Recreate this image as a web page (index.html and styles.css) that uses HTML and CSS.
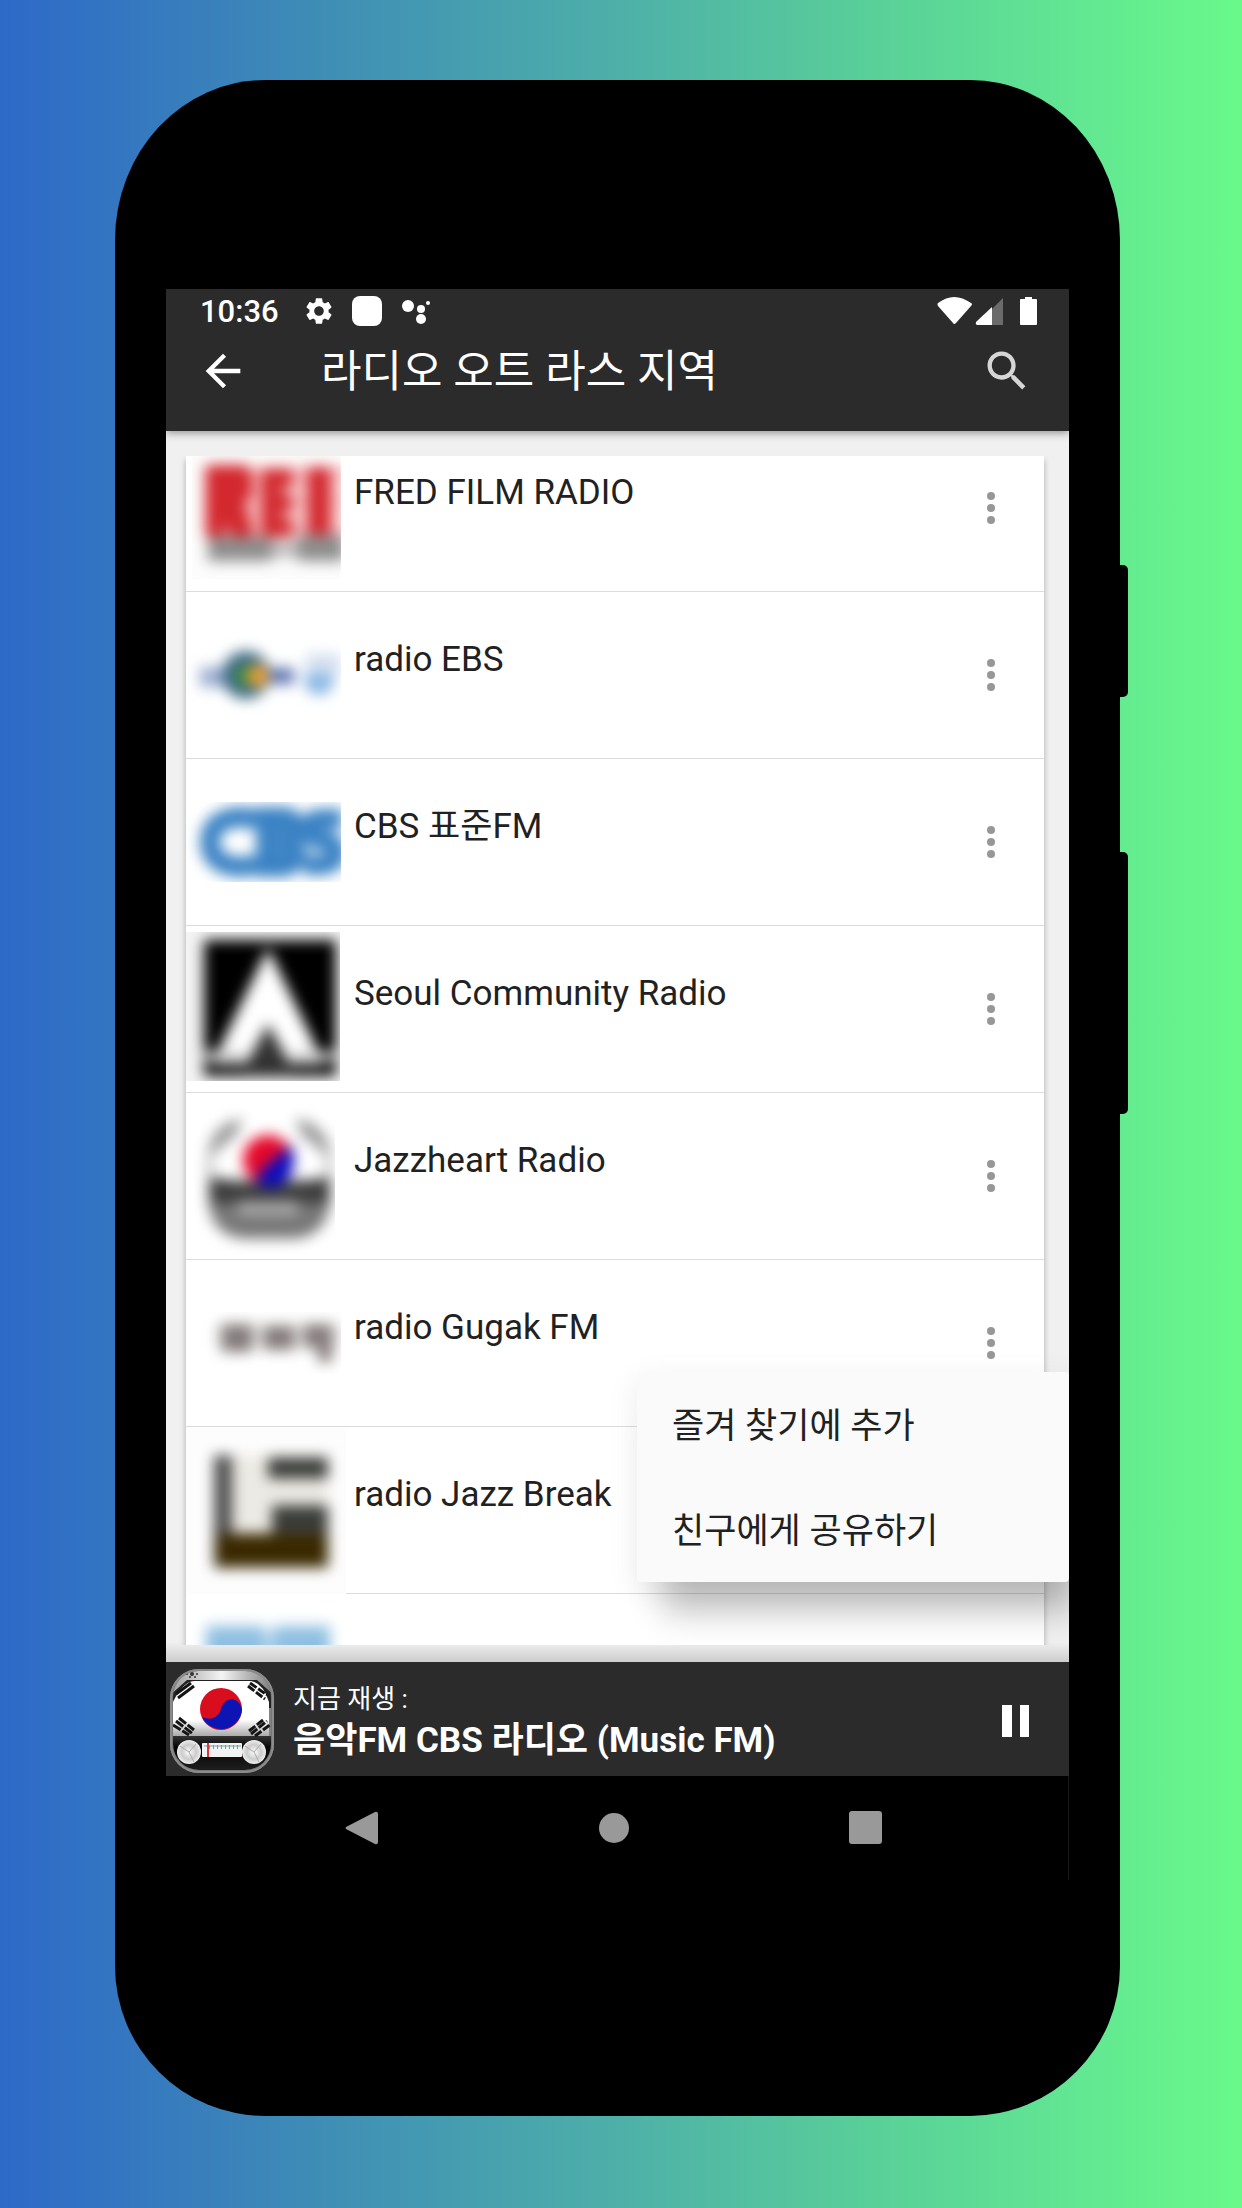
FILE: index.html
```html
<!DOCTYPE html>
<html lang="ko">
<head>
<meta charset="utf-8">
<meta name="viewport" content="width=device-width, initial-scale=1">
<title>라디오 오트 라스 지역</title>
<link rel="stylesheet" href="styles.css">
</head>
<body>
<div class="phone">
  <span class="side-key side-key--power"></span>
  <span class="side-key side-key--volume"></span>
  <div class="screen">
    <header class="app-header">
      <div class="status-bar">
        <time class="clock">10:36</time>
        <svg class="status-icon" width="32" height="32" viewBox="0 0 24 24" fill="#fff"><path d="M19.14 12.94c.04-.3.06-.61.06-.94 0-.32-.02-.64-.07-.94l2.03-1.58c.18-.14.23-.41.12-.61l-1.92-3.32c-.12-.22-.37-.29-.59-.22l-2.39.96c-.5-.38-1.03-.7-1.62-.94L14.4 2.81c-.04-.24-.24-.41-.48-.41h-3.84c-.24 0-.43.17-.47.41L9.25 5.35C8.66 5.59 8.12 5.92 7.63 6.29L5.24 5.33c-.22-.08-.47 0-.59.22L2.74 8.87c-.12.21-.08.47.12.61l2.03 1.58c-.05.3-.09.63-.09.94s.02.64.07.94l-2.03 1.58c-.18.14-.23.41-.12.61l1.92 3.32c.12.22.37.29.59.22l2.39-.96c.5.38 1.03.7 1.62.94l.36 2.54c.05.24.24.41.48.41h3.84c.24 0 .44-.17.47-.41l.36-2.54c.59-.24 1.13-.56 1.62-.94l2.39.96c.22.08.47 0 .59-.22l1.92-3.32c.12-.22.07-.47-.12-.61l-2.01-1.58zM12 15.6c-1.98 0-3.6-1.62-3.6-3.6s1.62-3.6 3.6-3.6 3.6 1.62 3.6 3.6-1.62 3.6-3.6 3.6z"/></svg>
        <span class="status-tile"></span>
        <svg class="status-icon" width="30" height="30" viewBox="0 0 30 30" fill="#fff"><circle cx="6" cy="10" r="6"/><circle cx="19" cy="13" r="4"/><circle cx="26" cy="7" r="2"/><circle cx="19" cy="23" r="5"/></svg>
        <svg class="status-signals" width="102" height="30" viewBox="0 0 102 30"><path fill="#fff" d="M1 7Q17-5 34 7Q36 8 34 10L19 27Q17 29 16 27L1 10Q0 8 1 7Z"/><path fill="#6b6b6b" d="M39 29L66 2V29Z"/><path fill="#fff" d="M40 29Q38 28 39 26L55 11V29Z"/><path fill="#fff" d="M88 1h7v2h4q1 0 1 1v24q0 1-1 1h-15q-1 0-1-1V4q0-1 1-1h4z"/></svg>
      </div>
      <div class="toolbar">
        <button class="icon-button" type="button" aria-label="뒤로"><svg width="52" height="52" viewBox="0 0 24 24" fill="#fff"><path d="M20 11H7.830l5.590-5.590L12 4l-8 8 8 8 1.410-1.410L7.830 13H20v-2z"/></svg></button>
        <h1 class="toolbar-title">라디오 오트 라스 지역</h1>
        <button class="icon-button" type="button" aria-label="검색"><svg width="52" height="52" viewBox="0 0 24 24" fill="#d6d6d6"><path d="M15.500 14h-.79l-.28-.27C15.410 12.590 16 11.110 16 9.500 16 5.910 13.090 3 9.500 3S3 5.910 3 9.500 5.910 16 9.500 16c1.610 0 3.090-.59 4.230-1.570l.27.28v.79l5 4.990L20.490 19l-4.990-5zm-6 0C7.010 14 5 11.990 5 9.500S7.010 5 9.500 5 14 7.010 14 9.500 11.990 14 9.500 14z"/></svg></button>
      </div>
    </header>

    <main class="content">
      <ul class="stations">
        <li class="station">
          <svg class="logo" viewBox="0 0 160 166"><g clip-path="url(#cut)"><rect x="6" y="20" width="148" height="134" fill="#fdfcfc"/><g filter="url(#soft)"><rect x="18" y="42" width="140" height="70" fill="#e8474d" fill-opacity=".4"/><path fill="#d2282e" d="M20 40h40l6 10v20l-8 8 10 34H20zM76 44h30v68H76zM122 42h22v70h-22z"/><path fill="#fff" opacity=".6" d="M94 62h24v8H94zM94 86h24v8H94zM38 96l8 16h-8zM148 56q14 22 0 44h12V56z"/><rect x="22" y="112" width="64" height="24" fill="#8d8d8d"/><rect x="86" y="116" width="26" height="16" fill="#bbb"/><rect x="112" y="110" width="46" height="26" fill="#8d8d8d"/></g></g></svg>
          <span class="station-name">FRED FILM RADIO</span>
          <button class="more" type="button" aria-label="더보기"><i></i><i></i><i></i></button>
        </li>
        <li class="station">
          <svg class="logo" viewBox="0 0 160 166"><g clip-path="url(#cut)"><g filter="url(#soft)"><rect x="14" y="75" width="38" height="20" fill="#9eafd2"/><circle cx="60" cy="83" r="24" fill="#3f6c86"/><rect x="80" y="76" width="28" height="16" fill="#5a73b0"/><circle cx="59" cy="84" r="10" fill="#389040"/><circle cx="72" cy="84" r="11" fill="#f0a02c"/><circle cx="133" cy="88" r="15" fill="#8ab8e4"/><rect x="120" y="62" width="34" height="20" fill="#d3dff0"/></g></g></svg>
          <span class="station-name">radio EBS</span>
          <button class="more" type="button" aria-label="더보기"><i></i><i></i><i></i></button>
        </li>
        <li class="station">
          <svg class="logo" viewBox="0 0 160 166"><g clip-path="url(#cut)"><g filter="url(#soft)" fill="none" stroke="#3a82c4" stroke-width="20"><path d="M72 64Q66 58 54 58Q24 60 24 83T54 108Q66 108 72 102"/><path fill="#4a8dca" d="M80 58h18q10 0 10 12t-10 13q12 2 12 12t-12 13H80z"/><path d="M156 60h-20q-13 0-13 10t13 11 14 12-14 13h-18"/></g></g></svg>
          <span class="station-name">CBS 표준FM</span>
          <button class="more" type="button" aria-label="더보기"><i></i><i></i><i></i></button>
        </li>
        <li class="station">
          <svg class="logo" viewBox="0 0 160 166"><g clip-path="url(#square)"><rect y="6" width="156" height="149" fill="#f4f4f4"/><g filter="url(#soft)"><rect x="18" y="14" width="132" height="136"/><path fill="#fff" d="M82 22L26 138H60L82 98L104 138H138Z"/><path fill="#333" d="M82 98L56 146H108Z"/><path stroke="#ccc" stroke-width="9" d="M14 130H58M106 130H156"/></g></g></svg>
          <span class="station-name">Seoul Community Radio</span>
          <button class="more" type="button" aria-label="더보기"><i></i><i></i><i></i></button>
        </li>
        <li class="station">
          <svg class="logo" viewBox="0 0 160 166"><g clip-path="url(#narrow)"><g filter="url(#soft)"><rect x="22" y="26" width="122" height="120" rx="36" fill="#999"/><path fill="#fff" d="M58 22h50l8 20 24 20v24H26V62l24-20z"/><path fill="#3c3c3c" d="M24 84l32 6h54l34-6v26H24z"/><path fill="#777" d="M26 110h116q-4 32-34 34H60q-30-2-34-34z"/><rect x="52" y="108" width="60" height="14" fill="#aaa"/><circle cx="82" cy="67" r="25" fill="#e4082a"/><path fill="#0c0cc0" d="M106 52Q112 76 100 88T70 90Q74 78 84 70T106 52Z"/></g></g></svg>
          <span class="station-name">Jazzheart Radio</span>
          <button class="more" type="button" aria-label="더보기"><i></i><i></i><i></i></button>
        </li>
        <li class="station">
          <svg class="logo" viewBox="0 0 160 166"><g clip-path="url(#cut)"><g filter="url(#soft)" fill="#857b7b"><path d="M36 64h30v28H36zM78 66h30v24H78zM118 64h28v38h-14V88h-14z"/><rect x="30" y="64" width="124" height="24" opacity=".25"/></g></g></svg>
          <span class="station-name">radio Gugak FM</span>
          <button class="more" type="button" aria-label="더보기"><i></i><i></i><i></i></button>
        </li>
        <li class="station">
          <svg class="logo logo--cover" viewBox="0 0 160 166"><g filter="url(#soft)"><rect x="28" y="28" width="114" height="112" fill="#eceae4"/><path fill="#4c4c4c" d="M28 28h18v112H28z"/><path fill="#3a3c38" d="M82 30h60v21H82zM86 78h56v28H86z"/><path fill="#3a2900" d="M30 106h112v34H30z"/></g></svg>
          <span class="station-name">radio Jazz Break</span>
          <button class="more" type="button" aria-label="더보기"><i></i><i></i><i></i></button>
        </li>
        <li class="station station--partial">
          <svg class="logo" viewBox="0 0 160 166"><g filter="url(#soft)" fill="#8fc0e2"><path d="M20 32h58v40H20zM88 32h56v40H88z"/><path opacity=".6" d="M70 36h24v40H70z"/></g></svg>
        </li>
      </ul>
      <ul class="popup-menu">
        <li><button class="menu-item" type="button">즐겨 찾기에 추가</button></li>
        <li><button class="menu-item" type="button">친구에게 공유하기</button></li>
      </ul>
    </main>

    <section class="player">
      <svg class="player-art" width="106" height="106" viewBox="0 0 106 106">
        <defs>
          <linearGradient id="metal"><stop offset="0" stop-color="#999"/><stop offset=".5" stop-color="#f4f4f4"/><stop offset=".75" stop-color="#b5b5b5"/><stop offset="1" stop-color="#777"/></linearGradient>
          <linearGradient id="flag" x2="0" y2="1"><stop offset=".7" stop-color="#fff"/><stop offset="1" stop-color="#aaa"/></linearGradient>
          <linearGradient id="base" x2="0" y2="1"><stop offset="0" stop-color="#333"/><stop offset=".3" stop-color="#050505"/><stop offset="1" stop-color="#222"/></linearGradient>
          <radialGradient id="knob"><stop offset="0" stop-color="#fff"/><stop offset=".6" stop-color="#ccc"/><stop offset="1" stop-color="#eee"/></radialGradient>
          <clipPath id="body"><rect x="4" y="3" width="98" height="99" rx="26"/></clipPath>
        </defs>
        <rect x="1" y="1" width="104" height="104" rx="29" fill="#777"/>
        <g clip-path="url(#body)">
          <rect width="106" height="106" fill="url(#metal)"/>
          <path fill="#222" d="M0 28L18 12H88L106 28V40H0Z"/>
          <path fill="url(#flag)" d="M4 34Q14 13 26 13H82Q94 15 100 34V68H4Z"/>
          <rect y="68" width="106" height="38" fill="url(#base)"/>
          <g stroke="#151515" stroke-width="3" fill="none"><path d="M7 26L22 15M9 30L25 18"/><path stroke-dasharray="8 2" d="M81 15L98 27M79 18L96 31"/><path stroke-dasharray="9 2" d="M4 57L20 67M7 53L24 66M10 50L25 62"/><path stroke-dasharray="8 2" d="M82 66L98 53M86 68L102 56M80 63L94 52"/></g>
          <circle cx="52" cy="41" r="21" fill="#d80d1e"/>
          <path fill="#0c14b4" d="M73 41A21 21 0 0 1 33 49Q45 54 51 44Q53 33 62 31Q70 31 73 41Z"/>
          <rect x="33" y="75" width="40" height="14" rx="1" fill="#f2f2f2"/>
          <path stroke="#6ca0ae" d="M35 78H72"/><path stroke="#6ca0ae" stroke-width="4" stroke-dasharray="1 3" d="M40 79H72"/>
          <path stroke="#e03434" stroke-width="2" d="M39 75V89"/>
        </g>
        <g fill="url(#knob)"><circle cx="20" cy="84" r="12"/><circle cx="85" cy="84" r="12"/></g>
        <g stroke="#aaa"><path d="M20 84L11 78M20 84L25 94M20 84L27 76M85 84L76 78M85 84L90 94M85 84L92 76"/></g>
        <g fill="#333"><circle cx="18" cy="6" r="1"/><circle cx="23" cy="6" r="2"/><circle cx="28" cy="6" r="1"/><circle cx="21" cy="9" r="1"/><circle cx="26" cy="9" r="1"/></g>
        <rect x="2" y="2" width="102" height="102" rx="28" fill="none" stroke="#8c8c8c" stroke-width="2"/>
      </svg>
      <div class="player-text">
        <span class="player-label">지금 재생 :</span>
        <strong class="player-title">음악FM CBS 라디오 (Music FM)</strong>
      </div>
      <button class="icon-button" type="button" aria-label="일시정지"><svg width="52" height="52" viewBox="0 0 52 52" fill="#fff"><path d="M12 10h10v32H12zM30 10h9v32h-9z"/></svg></button>
    </section>

    <nav class="system-nav">
      <button class="nav-key" type="button" aria-label="뒤로"><svg width="34" height="34" viewBox="0 0 34 34" fill="#999"><path d="M1 16L30 1Q33 0 33 3V31Q33 34 30 33L1 18Q0 17 1 16Z"/></svg></button>
      <button class="nav-key" type="button" aria-label="홈"><svg width="34" height="34" viewBox="0 0 34 34" fill="#999"><circle cx="17" cy="17" r="15"/></svg></button>
      <button class="nav-key" type="button" aria-label="최근 앱"><svg width="34" height="34" viewBox="0 0 34 34" fill="#999"><rect width="33" height="33" rx="3"/></svg></button>
    </nav>
  </div>
</div>
<svg class="shared-defs" width="0" height="0" aria-hidden="true">
  <filter id="soft" x="-20%" y="-30%" width="140%" height="160%" color-interpolation-filters="sRGB"><feGaussianBlur stdDeviation="7"/></filter>
  <clipPath id="cut"><rect width="155" height="166"/></clipPath>
  <clipPath id="square"><rect y="6" width="154" height="149"/></clipPath>
  <clipPath id="narrow"><rect width="149" height="166"/></clipPath>
</svg>
</body>
</html>
```
FILE: styles.css
```css
* {
  box-sizing: border-box;
}

body {
  margin: 0;
  padding: 80px 122px 92px 115px;
  background: linear-gradient(90deg, #2d69c8 0%, #3a82ba 18%, #459cb0 36%, #4eb0a8 50%, #59cf99 70%, #62e792 87%, #69f98a 100%);
  font-family: Roboto, "Noto Sans CJK KR", sans-serif;
  font-size: 35px;
  line-height: 44px;
  color: #212121;
}

ul {
  margin: 0;
  padding: 0;
  list-style: none;
}

button {
  border: 0;
  padding: 0;
  background: none;
  color: inherit;
  font: inherit;
  cursor: pointer;
}

svg {
  display: block;
  flex: none;
}

.shared-defs {
  position: absolute;
}

.phone {
  position: relative;
  padding: 209px 51px 236px;
  border-radius: 150px / 160px 160px 150px 150px;
  background: #000;
}

.side-key {
  position: absolute;
  right: -8px;
  width: 16px;
  border-radius: 5px;
  background: #000;
}

.side-key--power {
  top: 485px;
  height: 132px;
}

.side-key--volume {
  top: 772px;
  height: 262px;
}

.screen {
  display: flex;
  flex-direction: column;
}

.app-header {
  position: relative;
  z-index: 1;
  padding-bottom: 21px;
  background: #2b2b2b;
  color: #fff;
  box-shadow: 0 2px 8px rgba(0, 0, 0, 0.4);
}

.status-bar {
  display: flex;
  align-items: center;
  height: 43px;
  padding: 0 30px 0 34px;
}

.clock {
  margin-right: 24px;
  padding-top: 2px;
  font-size: 31px;
  font-weight: 500;
}

.status-icon {
  margin-right: 17px;
}

.status-tile {
  width: 30px;
  height: 30px;
  margin-right: 20px;
  border-radius: 8px;
  background: #fff;
}

.status-signals {
  margin-left: auto;
}

.toolbar {
  display: flex;
  align-items: center;
  height: 78px;
  padding: 0 36px 0 31px;
}

.toolbar-title {
  flex: 1;
  margin: 0 0 0 72px;
  padding-top: 2px;
  font-size: 44px;
  font-weight: 400;
}

.content {
  position: relative;
  overflow: hidden;
  padding: 25px 25px 17px 20px;
  background: linear-gradient(transparent calc(100% - 20px), #cdcdcd), #f0f0f0;
}

.stations {
  overflow: hidden;
  background: #fff;
  box-shadow: 0 4px 6px rgba(0, 0, 0, 0.28);
  clip-path: inset(0 -12px);
}

.station {
  display: flex;
  align-items: center;
  height: 167px;
  border-bottom: 1px solid #dcdcdc;
}

.station:first-child {
  margin-top: -31px;
}

.station--partial {
  align-items: flex-start;
  height: 51px;
  overflow: hidden;
  border: 0;
}

.logo {
  width: 160px;
  height: 166px;
}

.logo--cover {
  background: #fdfdfd;
  height: 167px;
}

.station-name {
  flex: 1;
  padding: 0 0 30px 8px;
}

.more {
  display: flex;
  flex-direction: column;
  align-items: center;
  gap: 4px;
  width: 32px;
  margin-right: 37px;
}

.more i {
  width: 8px;
  height: 8px;
  border-radius: 4px;
  background: #979797;
}

.popup-menu {
  position: absolute;
  right: 0;
  bottom: 80px;
  width: 432px;
  border-radius: 4px;
  background: #fafafa;
  box-shadow: 16px 40px 32px -10px rgba(0, 0, 0, 0.24), 0 8px 32px rgba(0, 0, 0, 0.08);
}

.menu-item {
  display: block;
  width: 100%;
  height: 105px;
  padding: 4px 35px 0;
  text-align: left;
}

.player {
  display: flex;
  align-items: center;
  height: 114px;
  padding: 3px 27px 0 3px;
  background: #2b2b2b;
  color: #fff;
}

.player-text {
  display: flex;
  flex: 1;
  flex-direction: column;
  margin-left: 18px;
}

.player-label {
  font-size: 26px;
  line-height: 40px;
}

.player-title {
  font-weight: 700;
}

.system-nav {
  display: flex;
  align-items: center;
  justify-content: space-between;
  height: 104px;
  padding: 0 185px 0 179px;
  border-right: 1px solid #161616;
}
```
